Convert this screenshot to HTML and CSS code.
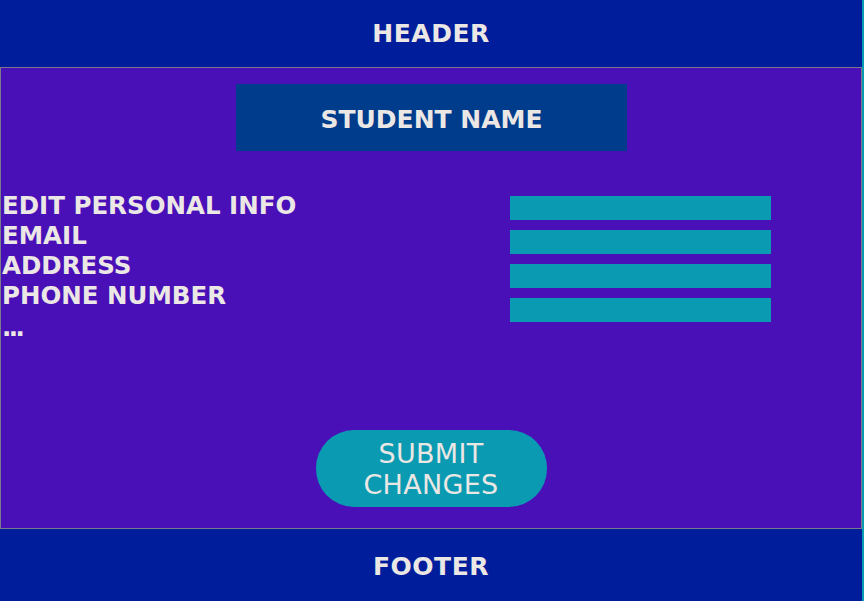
FILE: index.html
```html
<!DOCTYPE html>
<html>
<head>
<meta charset="utf-8">
<link rel="stylesheet" href="styles.css">
</head>
<body>
<div class="page">
  <header class="header">HEADER</header>
  <main class="main">
    <div class="name-box">STUDENT NAME</div>
    <div class="info-row">
      <div class="labels">
        <div class="label">EDIT PERSONAL INFO</div>
        <div class="label">EMAIL</div>
        <div class="label">ADDRESS</div>
        <div class="label">PHONE NUMBER</div>
        <div class="dots">...</div>
      </div>
      <div class="fields">
        <div class="field"></div>
        <div class="field"></div>
        <div class="field"></div>
        <div class="field"></div>
      </div>
    </div>
    <div class="actions">
      <button class="submit">SUBMIT<br>CHANGES</button>
    </div>
  </main>
  <footer class="footer">FOOTER</footer>
</div>
</body>
</html>
```
FILE: styles.css
```css
html, body {
  margin: 0;
  padding: 0;
  background: #0a9ab2;
  height: 601px;
  overflow: hidden;
}
.page {
  width: 862px;
  font-family: "DejaVu Sans", "Liberation Sans", sans-serif;
  color: #ebe7e4;
}
.header, .footer {
  background: #001e9c;
  display: flex;
  align-items: center;
  justify-content: center;
  font-weight: bold;
  font-size: 25px;
  letter-spacing: 0.5px;
}
.header {
  height: 67px;
}
.footer {
  height: 72px;
  padding-top: 2px;
  box-sizing: border-box;
}
.main {
  background: #4a10b8;
  border: 1px solid #7a7a8a;
  box-sizing: border-box;
  height: 462px;
  display: flex;
  flex-direction: column;
}
.name-box {
  align-self: center;
  margin-top: 16px;
  margin-left: 1px;
  width: 391px;
  height: 67px;
  background: #003c8c;
  display: flex;
  align-items: center;
  justify-content: center;
  font-weight: bold;
  font-size: 25px;
  padding-top: 3px;
  box-sizing: border-box;
}
.info-row {
  display: flex;
  margin-top: 40px;
  padding-left: 1px;
}
.labels {
  width: 508px;
  font-weight: bold;
  font-size: 24.5px;
  line-height: 30px;
}
.dots {
  letter-spacing: -2.5px;
  margin-top: 5px;
  line-height: 24px;
}
.fields {
  display: flex;
  flex-direction: column;
  gap: 10px;
  padding-top: 5px;
}
.field {
  width: 261px;
  height: 24px;
  background: #0a9ab2;
}
.actions {
  display: flex;
  justify-content: center;
  margin-top: auto;
  margin-bottom: 21px;
}
.submit {
  width: 231px;
  height: 77px;
  border: none;
  border-radius: 38px;
  background: #0a9ab2;
  color: #ebe7e4;
  font-family: "DejaVu Sans", "Liberation Sans", sans-serif;
  font-size: 27px;
  letter-spacing: 0.3px;
  line-height: 31px;
  padding: 0;
}
```
